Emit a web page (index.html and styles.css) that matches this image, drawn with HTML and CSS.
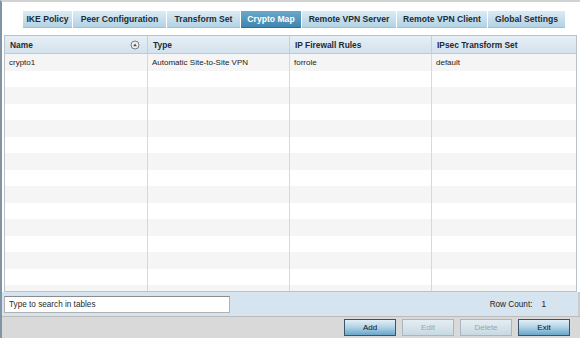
FILE: index.html
```html
<!DOCTYPE html>
<html>
<head>
<meta charset="utf-8">
<link rel="stylesheet" href="styles.css">
</head>
<body>
<div class="frame">
  <div class="tabs">
    <div class="tab w-ike">IKE Policy</div>
    <div class="tab w-peer">Peer Configuration</div>
    <div class="tab w-trans">Transform Set</div>
    <div class="tab w-crypto active">Crypto Map</div>
    <div class="tab w-server">Remote VPN Server</div>
    <div class="tab w-client">Remote VPN Client</div>
    <div class="tab w-global">Global Settings</div>
  </div>
  <div class="content">
    <div class="table">
      <div class="thead">
        <div class="th name">
          <span>Name</span>
          <svg class="sort" width="10" height="10" viewBox="0 0 10 10"><circle cx="5" cy="5" r="4" fill="#f2f2f2" stroke="#6f6f6f" stroke-width="0.9"/><polygon points="3,6.2 5,3.4 7,6.2" fill="#555"/></svg>
        </div>
        <div class="th">Type</div>
        <div class="th">IP Firewall Rules</div>
        <div class="th">IPsec Transform Set</div>
      </div>
      <div class="tbody">
        <div class="tr"><div class="td">crypto1</div><div class="td">Automatic Site-to-Site VPN</div><div class="td">forrole</div><div class="td">default</div></div>
        <div class="tr"><div class="td"></div><div class="td"></div><div class="td"></div><div class="td"></div></div>
        <div class="tr"><div class="td"></div><div class="td"></div><div class="td"></div><div class="td"></div></div>
        <div class="tr"><div class="td"></div><div class="td"></div><div class="td"></div><div class="td"></div></div>
        <div class="tr"><div class="td"></div><div class="td"></div><div class="td"></div><div class="td"></div></div>
        <div class="tr"><div class="td"></div><div class="td"></div><div class="td"></div><div class="td"></div></div>
        <div class="tr"><div class="td"></div><div class="td"></div><div class="td"></div><div class="td"></div></div>
        <div class="tr"><div class="td"></div><div class="td"></div><div class="td"></div><div class="td"></div></div>
        <div class="tr"><div class="td"></div><div class="td"></div><div class="td"></div><div class="td"></div></div>
        <div class="tr"><div class="td"></div><div class="td"></div><div class="td"></div><div class="td"></div></div>
        <div class="tr"><div class="td"></div><div class="td"></div><div class="td"></div><div class="td"></div></div>
        <div class="tr"><div class="td"></div><div class="td"></div><div class="td"></div><div class="td"></div></div>
        <div class="tr"><div class="td"></div><div class="td"></div><div class="td"></div><div class="td"></div></div>
        <div class="tr"><div class="td"></div><div class="td"></div><div class="td"></div><div class="td"></div></div>
        <div class="tr"><div class="td"></div><div class="td"></div><div class="td"></div><div class="td"></div></div>
      </div>
    </div>
  </div>
  <div class="searchbar">
    <div class="search">Type to search in tables</div>
    <div class="rowcount"><span>Row Count:</span><span class="count">1</span></div>
  </div>
  <div class="buttonbar">
    <div class="btn">Add</div>
    <div class="btn disabled">Edit</div>
    <div class="btn disabled">Delete</div>
    <div class="btn">Exit</div>
  </div>
</div>
</body>
</html>
```

FILE: styles.css
```css
* { box-sizing: border-box; }
html, body { margin: 0; padding: 0; background: #ffffff; }
body { font-family: "Liberation Sans", Arial, sans-serif; color: #1c1c1c; }

.frame {
  width: 580px;
  height: 338px;
  border-top: 2px solid #d2d2d2;
  border-left: 2px solid #7f95a5;
  display: flex;
  flex-direction: column;
  overflow: hidden;
}

.tabs {
  display: flex;
  gap: 1px;
  padding: 9px 0 0 21px;
  height: 26px;
  flex-shrink: 0;
}
.tab {
  flex-shrink: 0;
  white-space: nowrap;
  height: 17px;
  display: flex;
  align-items: center;
  justify-content: center;
  font-size: 8.6px;
  font-weight: bold;
  color: #1d2b38;
  background: linear-gradient(#dcecf5, #b1d2e4);
  border-bottom: 1px solid #9fc2d6;
}
.tab.active {
  color: #ffffff;
  background: linear-gradient(#6aa8cb, #3f86b0);
  border-bottom-color: #2f6f96;
}
.w-ike { width: 49px; }
.w-peer { width: 93px; }
.w-trans { width: 73px; }
.w-crypto { width: 60px; }
.w-server { width: 94px; }
.w-client { width: 90px; }
.w-global { width: 77px; }

.content {
  padding: 7px 3px 0 2px;
  flex-shrink: 0;
}
.table {
  border: 1px solid #bcc3c8;
  background: #ffffff;
  height: 257px;
  display: flex;
  flex-direction: column;
}
.thead {
  display: grid;
  grid-template-columns: 143px 142px 142px 1fr;
  height: 18px;
  flex-shrink: 0;
  background: linear-gradient(#e6eff5, #d3e2ed);
  border-bottom: 1px solid #bccbd6;
}
.th {
  font-size: 8.4px;
  font-weight: bold;
  color: #1e2a35;
  white-space: nowrap;
  display: flex;
  align-items: center;
  padding-left: 5px;
  border-right: 1px solid #c3d0da;
}
.th:last-child { border-right: none; }
.th.name { justify-content: space-between; padding-right: 7px; }
.sort { display: block; }

.tbody {
  flex: 1;
  overflow: hidden;
}
.tr {
  display: grid;
  grid-template-columns: 143px 142px 142px 1fr;
  height: 16.5px;
  background: #ffffff;
}
.tr:nth-child(odd) { background: #f5f5f5; }
.td {
  font-size: 8px;
  color: #222;
  white-space: nowrap;
  display: flex;
  align-items: center;
  padding-left: 4px;
  border-right: 1px solid #d8d8d8;
}
.td:last-child { border-right: none; }

.searchbar {
  height: 24px;
  flex-shrink: 0;
  background: #d6e4ef;
  display: flex;
  align-items: center;
  justify-content: space-between;
  padding: 0 32px 0 2px;
  border-right: 2px solid #c5ccd2;
}
.search {
  width: 226px;
  height: 17px;
  background: #ffffff;
  border: 1px solid #b2b2b2;
  border-top-color: #8c8c8c;
  font-size: 8.2px;
  color: #2a2a2a;
  display: flex;
  align-items: center;
  padding-left: 4px;
}
.rowcount {
  font-size: 8.2px;
  color: #222;
  display: flex;
  gap: 9px;
}

.buttonbar {
  flex: 1;
  background: #d9d9d9;
  border-top: 1px solid #bcbcbc;
  display: flex;
  justify-content: flex-end;
  align-items: flex-start;
  gap: 6px;
  padding: 2px 10px 0 0;
}
.btn {
  width: 52px;
  height: 17px;
  font-size: 8px;
  color: #111;
  display: flex;
  align-items: center;
  justify-content: center;
  border: 1px solid #3a5568;
  background: linear-gradient(#e2eff7 0%, #b4d4e7 45%, #6aa6ca 100%);
}
.btn.disabled {
  color: #9aa5ac;
  border-color: #a8b6bf;
  background: linear-gradient(#e4edf2, #c8d9e3);
}
```
